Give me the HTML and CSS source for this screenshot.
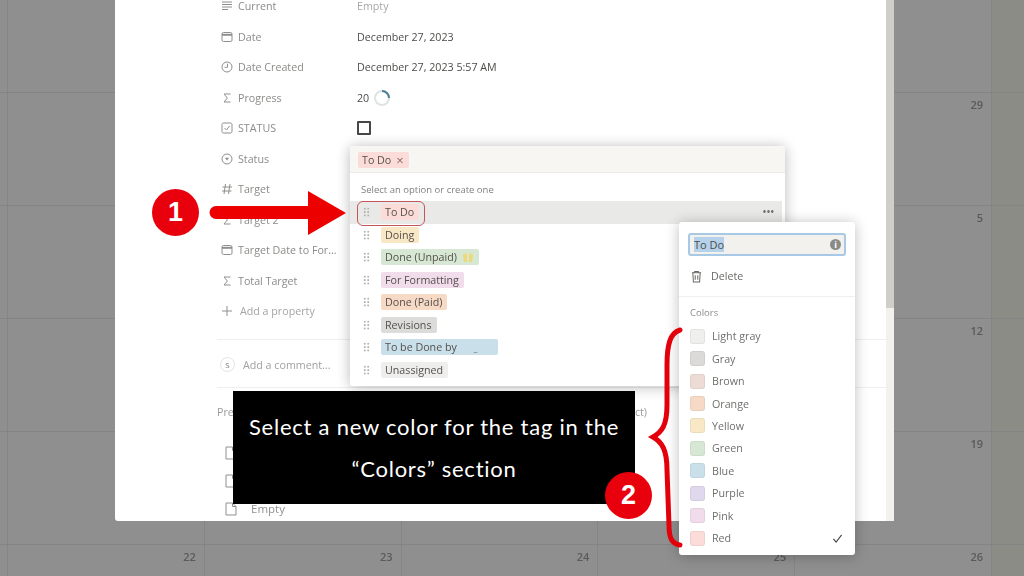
FILE: index.html
```html
<!DOCTYPE html>
<html lang="en">

<head>
    <meta charset="UTF-8" />
    <title>Select a new color for the tag</title>
    <link rel="stylesheet" href="styles.css">
</head>

<body>
    <!-- calendar behind the dimmed overlay -->
    <div class="calendar">
        <div class="week"><i></i><i></i><i></i><i></i><i></i><i></i><i></i></div>
        <div class="week"><i></i><i></i><i></i><i></i><i></i><i>29</i><i></i></div>
        <div class="week"><i></i><i></i><i></i><i></i><i></i><i>5</i><i></i></div>
        <div class="week"><i></i><i></i><i></i><i></i><i></i><i>12</i><i></i></div>
        <div class="week"><i></i><i></i><i></i><i></i><i></i><i>19</i><i></i></div>
        <div class="week"><i></i><i>22</i><i>23</i><i>24</i><i>25</i><i>26</i><i></i></div>
    </div>

    <!-- page modal -->
    <div class="modal">
        <div class="props">
            <div class="prop"><span class="prop-name"><svg class="ic" viewBox="0 0 12 12"><path d="M1 2h10M1 4.500h10M1 7h10M1 9.500h6"/></svg>Current</span><span class="empty">Empty</span></div>
            <div class="prop"><span class="prop-name"><svg class="ic" viewBox="0 0 12 12"><rect x="1" y="1.500" width="10" height="9" rx="1.500"/><path d="M1 3.800h10" stroke-width="2"/></svg>Date</span><span>December 27, 2023</span></div>
            <div class="prop"><span class="prop-name"><svg class="ic" viewBox="0 0 12 12"><circle cx="6" cy="6" r="5"/><path d="M6.500 2.800V6.300H3.600"/></svg>Date Created</span><span>December 27, 2023 5:57 AM</span></div>
            <div class="prop"><span class="prop-name"><svg class="ic" viewBox="0 0 12 12"><path d="M9.500 2H3l3.400 4L3 10h6.500"/></svg>Progress</span><span class="progress">20<svg class="ring" viewBox="0 0 18 18"><circle cx="9" cy="9" r="7"/><path d="M9 2a7 7 0 0 1 7 7"/></svg></span></div>
            <div class="prop"><span class="prop-name"><svg class="ic" viewBox="0 0 12 12"><rect x="1" y="1" width="10" height="10" rx="1.500"/><path d="M3.500 6l2 2 3-4"/></svg>STATUS</span><span class="checkbox"></span></div>
            <div class="prop"><span class="prop-name"><svg class="ic" viewBox="0 0 12 12"><circle cx="6" cy="6" r="5"/><path class="solid" d="M3.800 4.800h4.400L6 7.600z"/></svg>Status</span></div>
            <div class="prop"><span class="prop-name"><svg class="ic" viewBox="0 0 12 12"><path d="M4.500 1L3 11M9 1L7.500 11M1.500 4h9.500M1 8h9.500"/></svg>Target</span></div>
            <div class="prop"><span class="prop-name"><svg class="ic" viewBox="0 0 12 12"><path d="M9.500 2H3l3.400 4L3 10h6.500"/></svg>Target 2</span></div>
            <div class="prop"><span class="prop-name"><svg class="ic" viewBox="0 0 12 12"><rect x="1" y="1.500" width="10" height="9" rx="1.500"/><path d="M1 3.800h10" stroke-width="2"/></svg>Target Date to For...</span></div>
            <div class="prop"><span class="prop-name"><svg class="ic" viewBox="0 0 12 12"><path d="M9.500 2H3l3.400 4L3 10h6.500"/></svg>Total Target</span></div>
            <div class="prop add-prop"><span class="prop-name"><svg class="ic" viewBox="0 0 12 12"><path d="M6 1v10M1 6h10"/></svg>Add a property</span></div>
        </div>

        <div class="comment">
            <span class="avatar">S</span>
            <span>Add a comment...</span>
        </div>

        <div class="related-head"><span>Pre</span><span>ct)</span></div>
        <div class="related">
            <div class="page-row"><svg class="ic page" viewBox="0 0 12 14"><path d="M1 1h6.500L11 4.500V13H1zM7.500 1v3.500H11"/></svg></div>
            <div class="page-row"><svg class="ic page" viewBox="0 0 12 14"><path d="M1 1h6.500L11 4.500V13H1zM7.500 1v3.500H11"/></svg></div>
            <div class="page-row"><svg class="ic page" viewBox="0 0 12 14"><path d="M1 1h6.500L11 4.500V13H1zM7.500 1v3.500H11"/></svg>Empty</div>
        </div>
    </div>
    <div class="scrollbar"></div>

    <!-- option list -->
    <div class="select-menu">
        <div class="select-head"><span class="tag red">To Do <b>&#215;</b></span></div>
        <p class="hint">Select an option or create one</p>
        <ul class="options">
            <li class="active"><span class="grip"></span><span class="tag red">To Do</span><span class="more">&#8226;&#8226;&#8226;</span></li>
            <li><span class="grip"></span><span class="tag yellow">Doing</span></li>
            <li><span class="grip"></span><span class="tag green">Done (Unpaid)<svg class="hands" viewBox="0 0 12 12"><path d="M1 5l1-3 1 2 1-3 1 3v7H2zM11 5l-1-3-1 2-1-3-1 3v7h3z"/></svg></span></li>
            <li><span class="grip"></span><span class="tag pink">For Formatting</span></li>
            <li><span class="grip"></span><span class="tag orange">Done (Paid)</span></li>
            <li><span class="grip"></span><span class="tag gray">Revisions</span></li>
            <li><span class="grip"></span><span class="tag blue tag-wide">To be Done by<em>_</em></span></li>
            <li><span class="grip"></span><span class="tag light">Unassigned</span></li>
        </ul>
    </div>

    <!-- edit option menu -->
    <div class="edit-menu">
        <div class="name-input"><span class="selected">To Do</span><span class="info">i</span></div>
        <div class="delete"><svg class="trash" viewBox="0 0 12 14"><path d="M1 3h10M4 3V1.500h4V3M2 3l.6 10h6.800L10 3M4.600 5.500v5M7.400 5.500v5"/></svg>Delete</div>
        <div class="colors">
            <p class="colors-title">Colors</p>
            <div class="color"><span class="swatch s-light"></span>Light gray</div>
            <div class="color"><span class="swatch s-gray"></span>Gray</div>
            <div class="color"><span class="swatch s-brown"></span>Brown</div>
            <div class="color"><span class="swatch s-orange"></span>Orange</div>
            <div class="color"><span class="swatch s-yellow"></span>Yellow</div>
            <div class="color"><span class="swatch s-green"></span>Green</div>
            <div class="color"><span class="swatch s-blue"></span>Blue</div>
            <div class="color"><span class="swatch s-purple"></span>Purple</div>
            <div class="color"><span class="swatch s-pink"></span>Pink</div>
            <div class="color"><span class="swatch s-red"></span>Red<svg class="check" viewBox="0 0 12 12"><path d="M1.500 6.500l3 3.500L10.500 2"/></svg></div>
        </div>
    </div>

    <!-- tutorial annotations -->
    <svg class="marks" viewBox="0 0 1024 576">
        <path class="shaft" d="M216 212.500H312"/>
        <path class="head" d="M308 191L346 213L308 235z"/>
        <path class="brace" d="M680 330C670 333 667 345 667 365V405C667 425 662 432 653 437C662 442 667 450 667 470L669 525C669 538 672 544 680 545"/>
    </svg>
    <div class="outline"></div>
    <div class="step step-one">1</div>
    <div class="caption">Select a new color for the tag in the<br>&#8220;Colors&#8221; section</div>
    <div class="step step-two">2</div>
</body>

</html>
```

FILE: styles.css
```css
body {
    margin: 0;
    width: 1024px;
    height: 576px;
    overflow: hidden;
    position: relative;
    background: #8f8f8f;
    font-family: "Open Sans", sans-serif;
    font-size: 10.7px;
    color: #4c4c4a;
    filter: blur(0.35px);
}

p {
    margin: 0;
}

/* Calendar */
.calendar {
    margin-top: -20px;
}

.week {
    display: grid;
    grid-template-columns: 8px repeat(5, 196.8px) 1fr;
    height: 113px;
    box-sizing: border-box;
    border-bottom: 1px solid #848484;
}

.week:last-child {
    height: 32px;
    border-bottom: none;
}

.week i {
    font-style: normal;
    font-size: 11px;
    font-weight: 600;
    color: #5a5a5a;
    text-align: right;
    padding: 4px 8px 0 0;
    border-right: 1px solid #858585;
}

.week i:first-child {
    padding: 0;
}

.week i:last-child {
    background: #8c8c86;
    border-right: none;
}

/* Modal */
.modal {
    position: absolute;
    left: 115px;
    top: 0;
    width: 771px;
    height: 521px;
    box-sizing: border-box;
    padding-left: 102px;
    background: white;
    overflow: hidden;
    border-radius: 0 0 0 3px;
}

.scrollbar {
    position: absolute;
    left: 886px;
    top: 0;
    width: 8px;
    height: 308px;
    background: #cfcec9;
}

.scrollbar::after {
    content: "";
    position: absolute;
    left: 0;
    top: 308px;
    width: 8px;
    height: 213px;
    background: #f2f1ee;
}

.props {
    margin-top: -9px;
    padding-left: 4px;
}

.prop {
    display: grid;
    grid-template-columns: 136px 1fr;
    align-items: center;
    height: 30.5px;
}

.prop-name {
    display: flex;
    align-items: center;
    gap: 5px;
    color: #8b8b89;
}

.add-prop .prop-name {
    gap: 7px;
    color: #a5a5a3;
}

.ic {
    width: 12px;
    height: 12px;
    fill: none;
    stroke: #8f8f8d;
    stroke-width: 1;
    flex: none;
}

.ic .solid {
    fill: #8f8f8d;
    stroke: none;
}

.empty {
    color: #a8a8a6;
}

.progress {
    display: flex;
    align-items: center;
    gap: 4px;
}

.ring {
    width: 18px;
    height: 18px;
    fill: none;
    stroke: #dfe3e5;
    stroke-width: 2;
}

.ring path {
    stroke: #4a7f9c;
}

.checkbox {
    width: 10px;
    height: 10px;
    border: 2px solid #474745;
    border-radius: 1px;
}

.comment {
    display: flex;
    align-items: center;
    gap: 8px;
    height: 49px;
    margin-top: 12px;
    padding: 3px 0 0 3px;
    border-top: 1px solid #efefed;
    border-bottom: 1px solid #efefed;
    color: #a0a09e;
    box-sizing: border-box;
}

.avatar {
    display: flex;
    align-items: center;
    justify-content: center;
    width: 13px;
    height: 13px;
    border: 1px solid #e3e3e1;
    border-radius: 50%;
    font-size: 8px;
    color: #777;
}

.related-head {
    display: flex;
    justify-content: space-between;
    width: 430px;
    margin-top: 17px;
    color: #9a9a98;
}

.related {
    margin-top: 20px;
}

.page-row {
    display: flex;
    align-items: center;
    gap: 14px;
    height: 28px;
    padding-left: 8px;
    font-size: 11.5px;
    color: #91918f;
}

.page {
    height: 14px;
}

/* Option list */
.select-menu {
    position: absolute;
    left: 350px;
    top: 146px;
    width: 435px;
    height: 240px;
    background: white;
    border-radius: 3px;
    box-shadow: 0 1px 14px rgba(0, 0, 0, 0.28);
}

.select-head {
    display: flex;
    align-items: center;
    height: 27px;
    padding: 2px 0 0 8px;
    background: #f7f6f3;
    border-bottom: 1px solid #ecebe8;
    box-sizing: border-box;
}

.hint {
    margin: 10px 0 0 11px;
    font-size: 9.5px;
    line-height: 13px;
    color: #7f7f7d;
}

.options {
    list-style: none;
    margin: 5px 0 0;
    padding: 0;
}

.options li {
    display: flex;
    align-items: center;
    height: 22.5px;
    padding-left: 13px;
}

.options .active {
    width: 432px;
    padding-left: 13px;
    box-sizing: border-box;
    background: #e9e9e7;
}

.grip {
    width: 7px;
    height: 10px;
    margin-right: 11px;
    background: radial-gradient(circle, #b0b0ae 1px, transparent 1.2px) 0 0 / 3.5px 3.4px;
}

.more {
    margin-left: auto;
    margin-right: 8px;
    font-size: 12px;
    line-height: 12px;
    letter-spacing: -0.6px;
    color: #6f6f6d;
}

.tag {
    display: inline-flex;
    align-items: center;
    height: 16px;
    padding: 0 5px 0 4px;
    border-radius: 2px;
    color: #56504c;
}

.tag b {
    margin-left: 5px;
    font-weight: 400;
    font-size: 13px;
    color: #8a6a66;
}

.red { background: #fbdcd8; }
.yellow { background: #f9e8c6; }
.green { background: #d6e8d3; }
.pink { background: #f0dcea; }
.orange { background: #f6dac6; }
.gray { background: #dcdcda; }
.blue { background: #c9e0ea; }
.light { background: #eeeeec; }

.hands {
    width: 12px;
    height: 12px;
    margin-left: 5px;
    fill: #eed977;
}

.tag-wide {
    width: 117px;
    box-sizing: border-box;
}

.tag-wide em {
    margin: 2px 0 0 17px;
    font-style: normal;
    font-size: 8px;
}

/* Edit option menu */
.edit-menu {
    position: absolute;
    left: 679px;
    top: 222px;
    width: 176px;
    height: 333px;
    background: white;
    border-radius: 3px;
    box-shadow: 0 1px 14px rgba(0, 0, 0, 0.26);
}

.name-input {
    display: flex;
    align-items: center;
    justify-content: space-between;
    width: 158px;
    height: 23px;
    margin: 11px 0 0 9px;
    padding: 0 3px 0 4px;
    box-sizing: border-box;
    background: #f2f1ee;
    border: 2px solid #a7c9e6;
    border-radius: 3px;
    font-size: 11px;
}

.selected {
    background: #b6d2ea;
}

.info {
    width: 11px;
    height: 11px;
    line-height: 11px;
    text-align: center;
    border-radius: 50%;
    background: #8a8a88;
    color: white;
    font-size: 9px;
    font-weight: 700;
}

.delete {
    display: flex;
    align-items: center;
    gap: 9px;
    height: 41px;
    padding-left: 12px;
    border-bottom: 1px solid #efefed;
    box-sizing: border-box;
    font-size: 10.7px;
    color: #6a6a68;
}

.trash {
    width: 11px;
    height: 13px;
    fill: none;
    stroke: #666664;
    stroke-width: 1.1;
}

.colors {
    padding: 9px 0 0 11px;
}

.colors-title {
    font-size: 9.5px;
    line-height: 13px;
    color: #8b8b89;
    margin-bottom: 6px;
}

.color {
    display: flex;
    align-items: center;
    gap: 7px;
    height: 22.45px;
    color: #6f6f6d;
}

.swatch {
    width: 13px;
    height: 13px;
    border: 1px solid rgba(0, 0, 0, 0.05);
    border-radius: 3px;
}

.s-light { background: #efefed; }
.s-gray { background: #dcdad8; }
.s-brown { background: #ecdcd5; }
.s-orange { background: #f6dac6; }
.s-yellow { background: #f9e8c6; }
.s-green { background: #d6e8d3; }
.s-blue { background: #c9e0ea; }
.s-purple { background: #e0d8ec; }
.s-pink { background: #f0dcea; }
.s-red { background: #fbdcd8; }

.check {
    width: 11px;
    height: 11px;
    margin-left: auto;
    margin-right: 12px;
    fill: none;
    stroke: #444;
    stroke-width: 1.2;
}

/* Annotations */
.marks {
    position: absolute;
    left: 0;
    top: 0;
    width: 1024px;
    height: 576px;
    pointer-events: none;
}

.shaft {
    fill: none;
    stroke: #ec0000;
    stroke-width: 13;
    stroke-linecap: round;
}

.head {
    fill: #ec0000;
}

.brace {
    fill: none;
    stroke: #e4000b;
    stroke-width: 5;
    stroke-linecap: round;
}

.outline {
    position: absolute;
    left: 357px;
    top: 201px;
    width: 66px;
    height: 23px;
    border: 1px solid #c2565a;
    border-radius: 6px;
}

.step {
    position: absolute;
    display: flex;
    align-items: center;
    justify-content: center;
    width: 47px;
    height: 47px;
    border-radius: 50%;
    background: #e8000d;
    color: white;
    font-family: "Liberation Sans", sans-serif;
    font-size: 27px;
    font-weight: 700;
}

.step-one {
    left: 152px;
    top: 189px;
}

.step-two {
    left: 605px;
    top: 472px;
}

.caption {
    position: absolute;
    left: 233px;
    top: 391px;
    width: 402px;
    height: 113px;
    padding-top: 15px;
    box-sizing: border-box;
    background: black;
    color: white;
    text-align: center;
    font-family: "Lato", sans-serif;
    font-size: 22px;
    line-height: 42px;
    letter-spacing: 0.76px;
    white-space: nowrap;
}
```
